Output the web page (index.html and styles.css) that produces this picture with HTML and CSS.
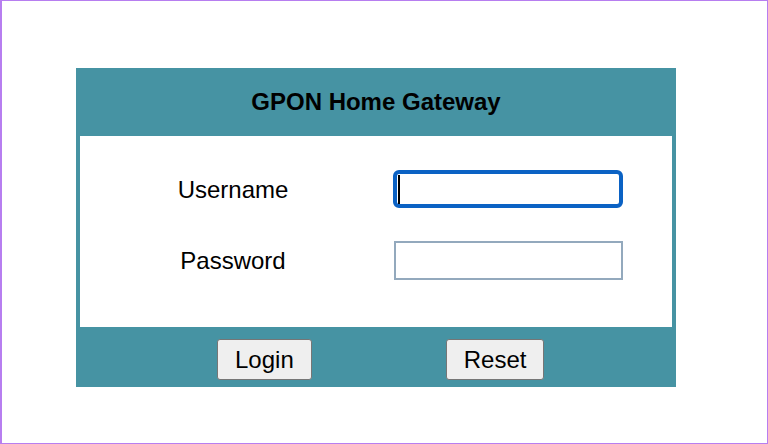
FILE: index.html
```html
<!DOCTYPE html>
<html lang="en">
<head>
<meta charset="utf-8">
<title>GPON Home Gateway</title>
<link rel="stylesheet" href="styles.css">
</head>
<body>
<div class="panel">
  <div class="panel-head">GPON Home Gateway</div>
  <div class="panel-body">
    <div class="form-grid">
      <label class="label" for="user">Username</label>
      <span class="field-wrap">
        <input class="field field-focus" id="user" type="text">
        <span class="caret"></span>
      </span>
      <label class="label" for="pass">Password</label>
      <input class="field field-plain" id="pass" type="password">
    </div>
  </div>
  <div class="panel-foot">
    <button class="btn" type="button">Login</button>
    <button class="btn" type="button">Reset</button>
  </div>
</div>
</body>
</html>
```
FILE: styles.css
```css
html, body {
  margin: 0;
  padding: 0;
}
body {
  box-sizing: border-box;
  width: 768px;
  height: 444px;
  border: 1px solid #b77ef0;
  border-left-width: 2px;
  background: #ffffff;
  font-family: "Liberation Sans", Arial, sans-serif;
  color: #000;
  padding-top: 67px;
  overflow: hidden;
}
.panel {
  width: 600px;
  margin-left: 74px;
  background: #4693a3;
}
.panel-head {
  height: 68px;
  display: flex;
  align-items: center;
  justify-content: center;
  font-size: 24px;
  font-weight: bold;
}
.panel-body {
  margin: 0 4px;
  height: 191px;
  background: #ffffff;
  box-sizing: border-box;
  padding-top: 35px;
}
.form-grid {
  display: grid;
  grid-template-columns: 306px 230px;
  column-gap: 8px;
  row-gap: 33px;
  align-items: center;
}
.label {
  text-align: center;
  font-size: 24px;
}
.field-wrap {
  position: relative;
  display: block;
  height: 38px;
}
.field {
  box-sizing: border-box;
  width: 229px;
  height: 38px;
  border: 2px solid #93a9bd;
  border-radius: 0;
  padding: 0 4px;
  font-size: 20px;
  font-family: "Liberation Sans", Arial, sans-serif;
  background: #fff;
  outline: none;
  display: block;
}
.field-plain {
  height: 39px;
  margin-top: -1px;
}
.field-focus {
  border: 4px solid #0b62c4;
  border-radius: 6px;
  width: 230px;
  height: 38px;
  margin: -1px 0 0 -1px;
}
.caret {
  position: absolute;
  left: 4px;
  top: 4px;
  width: 2px;
  height: 29px;
  background: #000;
}
.panel-foot {
  height: 60px;
  box-sizing: border-box;
  display: flex;
  align-items: flex-start;
  padding: 12px 0 0 141px;
  gap: 134px;
}
.btn {
  height: 41px;
  padding: 0 17px;
  font-size: 24px;
  font-family: "Liberation Sans", Arial, sans-serif;
  color: #000;
  background: #efefef;
  border: 1px solid #767676;
  border-radius: 3px;
}
```
